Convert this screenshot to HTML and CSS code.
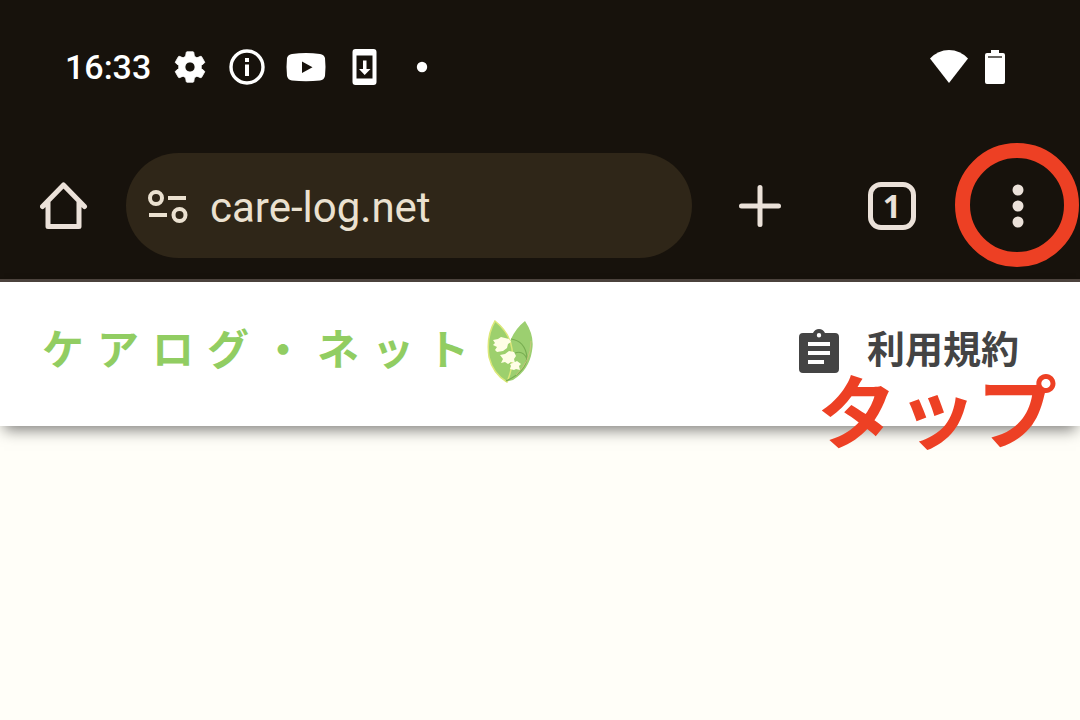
FILE: index.html
```html
<!DOCTYPE html>
<html lang="ja">
<head>
  <meta charset="UTF-8">
  <meta name="viewport" content="width=device-width, initial-scale=1">
  <title>ケアログ・ネット</title>
  <link rel="stylesheet" href="styles.css">
</head>
<body>
  <div class="browser">
    <div class="status-bar">
      <span class="time">16:33</span>
      <svg class="icon" viewBox="0 0 24 24"><path stroke="#fff" stroke-width=".6" d="M19.4 13c0-.3.1-.6.1-1s0-.7-.1-1l2.2-1.700c.2-.2.3-.4.100-.7l-2-3.500c-.1-.2-.4-.3-.6-.2l-2.500 1c-.5-.4-1.100-.7-1.700-1L14.500 2.300c0-.2-.2-.4-.5-.4h-4c-.3 0-.5.200-.5.400L9.100 4.900c-.6.300-1.200.600-1.700 1l-2.500-1c-.2-.1-.5 0-.6.200l-2 3.500c-.1.200-.1.500.1.700L4.600 11c0 .3-.1.700-.1 1s0 .7.1 1l-2.200 1.700c-.2.200-.2.400-.1.700l2 3.500c.1.200.4.300.6.200l2.500-1c.5.400 1.100.700 1.700 1l.4 2.600c0 .2.200.4.500.4h4c.3 0 .5-.2.500-.4l.4-2.600c.6-.3 1.200-.6 1.700-1l2.500 1c.2.100.5 0 .6-.2l2-3.500c.1-.2.100-.5-.1-.7L19.400 13zM12 15.400a3.400 3.400 0 1 1 0-6.800 3.400 3.400 0 0 1 0 6.800z"/></svg>
      <svg class="icon" viewBox="0 0 36 36"><circle cx="18" cy="18" r="16" fill="none" stroke="#fff" stroke-width="3.400"/><path d="M16 9h4v4h-4zM16 15.500h4V27h-4z"/></svg>
      <svg class="icon icon-video" viewBox="0 0 40 36"><path fill-rule="evenodd" d="M6 5Q20 3 34 5Q38 5.500 39 9Q40 18 39 27Q38 31 34 31.500Q20 33 6 31.500Q2 31 1 27Q0 18 1 9Q2 5.500 6 5zM16 12.500v11.500l10.500-5.800z"/></svg>
      <svg class="icon" viewBox="0 0 36 36"><path fill-rule="evenodd" d="M8.500 0h18Q29.500 0 29.500 3v30q0 3-3 3h-18q-3 0-3-3V3q0-3 3-3zM9.500 6.500v23h16v-23z"/><path d="M16 11.500h3.500V20h4L17.700 26 12 20h4z"/></svg>
      <svg class="icon" viewBox="0 0 36 36"><circle cx="18" cy="18" r="5.200"/></svg>
      <div class="status-right">
        <svg class="icon icon-wifi" viewBox="0 0 40 36"><path d="M1 9.500Q9 1 20 1t19 8.500L20 34z"/></svg>
        <svg class="icon icon-battery" viewBox="0 0 20 36"><path d="M6 1h8v3h4q2 0 2 2v27q0 2-2 2H2q-2 0-2-2V6q0-2 2-2h4z"/><path d="M3 8h14" stroke="#17130d" stroke-width="1.300"/></svg>
      </div>
    </div>

    <div class="toolbar">
      <button class="tool" aria-label="ホーム">
        <svg viewBox="0 0 48 48"><path d="M2.500 24.500L23.500 3l21 21.500M8 20v24.500h31V20"/></svg>
      </button>
      <div class="address">
        <svg class="site-info" viewBox="0 0 40 36"><circle cx="8" cy="10" r="6"/><path d="M20 10h18M1 27h18"/><circle cx="31.500" cy="27" r="6"/></svg>
        <input class="url" type="text" value="care-log.net" aria-label="アドレス">
      </div>
      <div class="actions">
        <button class="tool tool-new" aria-label="新しいタブ">
          <svg viewBox="0 0 48 48"><path d="M24 5.500v37M5.500 24h37"/></svg>
        </button>
        <button class="tool tool-tabs" aria-label="タブ一覧">1</button>
        <button class="tool tool-menu" aria-label="メニュー">
          <svg viewBox="0 0 48 48"><circle cx="24" cy="8" r="5.500"/><circle cx="24" cy="24" r="5.500"/><circle cx="24" cy="40" r="5.500"/></svg>
          <span class="ring"></span>
        </button>
      </div>
    </div>
  </div>

  <header class="site-header">
    <a class="logo" href="#">
      <span class="logo-text">ケアログ・ネット</span>
      <svg class="leaf" viewBox="0 0 46 64">
        <path d="M38 2Q48 17 45 32Q42 51 26 61L18 63Q16 40 24 20Q29 9 38 2z" fill="#9ccf70"/>
        <path d="M8 2Q23 14 25 30Q27 47 20 63Q6 55 2 38Q-1 17 8 2z" fill="#9dd06d" stroke="#dce879" stroke-width="1.500"/>
        <path d="M19 62Q39 53 40 38Q38 22 24 20M28 34Q36 31 40 40" fill="none" stroke="#78ae51" stroke-width="1.200"/>
        <path d="M44 22Q44 42 29 56" fill="none" stroke="#d3c780" stroke-width=".8"/>
        <path d="M6 21l5-1 3-2 4 1 4 1 2 3-3 2-1 4-4 3-6 1-2-2 2-3-4-2 2-2zM13 36l5-1 4-3 5 1 2 4-2 3 1 4-4-1-3 2-3-2-4 1 2-4zM23 45l3-1 4-2 4 3-2 2 1 4-4-1-2 1-4-1 1-3z" fill="#fffee6"/>
      </svg>
    </a>
    <a class="terms" href="#">
      <svg class="clipboard" viewBox="0 0 40 44"><path fill-rule="evenodd" d="M4 4h10Q16 0 20 0t6 4h10q4 0 4 4v32q0 4-4 4H4q-4 0-4-4V8q0-4 4-4zM20 4a2.200 2.200 0 1 0 0 4.400A2.200 2.200 0 1 0 20 4zM9 13v4h22v-4zM9 22v4h22v-4zM9 31v4h16v-4z"/></svg>
      <span class="terms-text">利用規約</span>
    </a>
    <span class="tap">タップ</span>
  </header>
  <main></main>
</body>
</html>
```

FILE: styles.css
```css
* {
  box-sizing: border-box;
}
body {
  margin: 0;
  min-height: 100vh;
  background-color: #fffef8;
  font-family: "Noto Sans CJK JP", sans-serif;
}
.browser {
  background-color: #17120c;
  border-bottom: 3px solid #4d443e;
  font-family: Roboto, sans-serif;
}
.status-bar {
  display: flex;
  align-items: center;
  gap: 21px;
  height: 132px;
  padding: 2px 75px 0 65px;
  color: #fff;
}
.time {
  font-size: 34px;
  font-weight: 500;
}
.icon {
  flex: none;
  width: 36px;
  height: 36px;
  fill: #fff;
}
.icon-video,
.icon-wifi {
  width: 40px;
}
.icon-battery {
  width: 20px;
}
.status-right {
  display: flex;
  gap: 16px;
  margin-left: auto;
}
.toolbar {
  display: flex;
  align-items: center;
  gap: 38px;
  height: 147px;
  padding: 0 38px 0 40px;
}
.tool {
  position: relative;
  flex: none;
  width: 48px;
  height: 48px;
  padding: 0;
  border: none;
  background: none;
  color: #ebe1d9;
  cursor: pointer;
}
.tool svg {
  display: block;
  width: 48px;
  height: 48px;
  margin: 0 auto;
  fill: none;
  stroke: currentColor;
  stroke-width: 5;
  stroke-linecap: round;
  stroke-linejoin: round;
}
.address {
  display: flex;
  flex: 1;
  align-items: center;
  gap: 22px;
  min-width: 0;
  height: 105px;
  padding: 0 32px 0 22px;
  border-radius: 53px;
  background-color: #2f2618;
}
.site-info {
  flex: none;
  width: 40px;
  height: 36px;
  fill: none;
  stroke: #ebe1d0;
  stroke-width: 4;
}
.url {
  flex: 1;
  min-width: 0;
  padding: 4px 0 0;
  border: none;
  outline: none;
  background: none;
  color: #ebe1d0;
  font-family: inherit;
  font-size: 42px;
}
.actions {
  display: flex;
  gap: 78px;
}
.tool-new {
  width: 60px;
}
.tool-tabs {
  border: 5px solid #ebe1d9;
  border-radius: 13px;
  font-family: "Noto Sans", sans-serif;
  font-size: 32px;
  font-weight: 700;
  line-height: 36px;
}
.tool-menu svg {
  fill: currentColor;
  stroke: none;
}
.ring {
  position: absolute;
  top: -39px;
  left: -39px;
  width: 124px;
  height: 124px;
  border: 15px solid #ed4024;
  border-radius: 50%;
}
.site-header {
  position: relative;
  display: flex;
  align-items: center;
  justify-content: space-between;
  height: 144px;
  padding: 0 61px 6px 42px;
  background-color: #fff;
  box-shadow: 0 8px 14px -4px rgba(0, 0, 0, 0.5);
}
.logo,
.terms {
  display: flex;
  align-items: center;
  text-decoration: none;
}
.logo {
  gap: 5px;
  color: #91cd62;
  font-size: 42px;
  font-weight: 700;
}
.logo-text,
.terms-text {
  padding-bottom: 8px;
  line-height: 60px;
}
.logo-text {
  letter-spacing: 13px;
}
.leaf {
  width: 46px;
  height: 64px;
}
.terms {
  gap: 28px;
  color: #444;
  font-size: 38px;
  font-weight: 700;
}
.clipboard {
  width: 40px;
  height: 44px;
  fill: #444;
}
.tap {
  position: absolute;
  top: 65px;
  right: 23px;
  color: #ed4024;
  font-size: 80px;
  font-weight: 700;
  line-height: 120px;
}
```
